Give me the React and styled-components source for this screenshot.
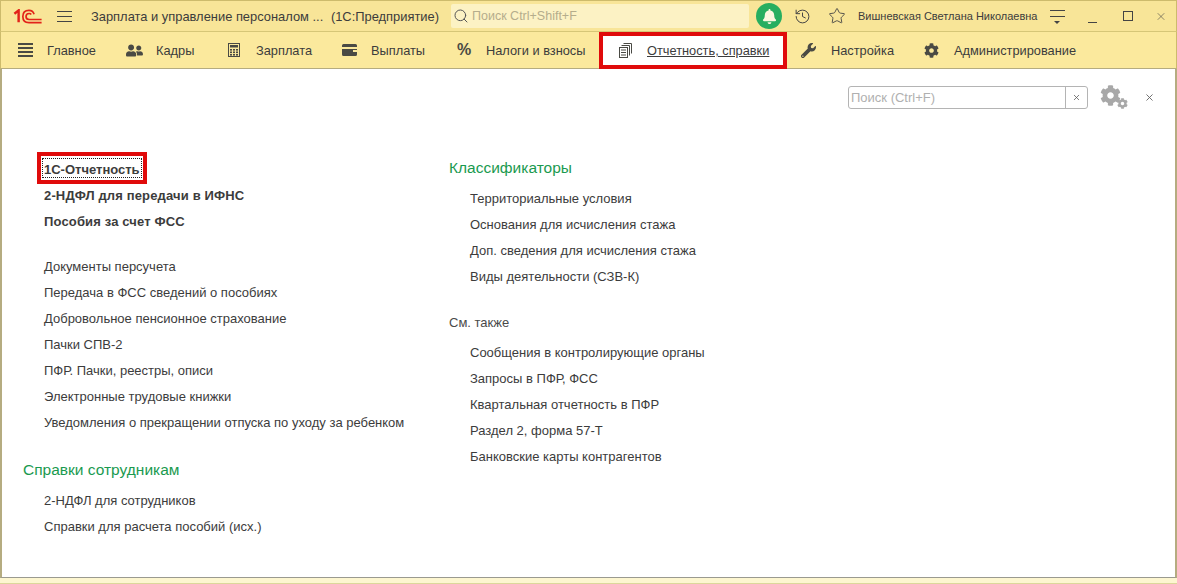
import React from 'react';
import styled, { createGlobalStyle } from 'styled-components';
import { FaUserFriends, FaWrench, FaCog, FaBell } from 'react-icons/fa';
import { History, Star, Search, X } from 'lucide-react';

const GlobalStyle = createGlobalStyle`
  html, body {
    margin: 0;
    padding: 0;
    background: #fff;
  }
  body {
    font-family: 'Liberation Sans', Arial, sans-serif;
    color: #333;
  }
`;

const Window = styled.div`
  width: 1177px;
  height: 584px;
  box-sizing: border-box;
  display: flex;
  flex-direction: column;
  overflow: hidden;
  background: #fdf6d0;
`;
const TitleBar = styled.header`
  height: 32px;
  flex: none;
  box-sizing: border-box;
  display: flex;
  align-items: center;
  background: #f8e598;
  border-top: 1px solid #cdbb6c;
  border-bottom: 1px solid #d6c677;
  border-left: 1px solid #cdbb6c;
  border-right: 1px solid #cdbb6c;
`;
const LogoBox = styled.div`
  width: 44px;
  margin-left: 12px;
  display: flex;
`;
const Burger = styled.div`
  width: 15px;
  height: 9px;
  margin-right: 19px;
  border-top: 1px solid #444;
  border-bottom: 1px solid #444;
  position: relative;
  &:after {
    content: '';
    position: absolute;
    left: 0;
    right: 0;
    top: 4px;
    height: 1px;
    background: #444;
  }
`;
const AppTitle = styled.div`
  font-size: 12.9px;
  color: #3c3c3c;
  width: 360px;
  display: flex;
  justify-content: space-between;
  padding-right: 12px;
  box-sizing: border-box;
  white-space: nowrap;
`;
const GlobalSearch = styled.div`
  width: 298px;
  height: 24px;
  display: flex;
  align-items: center;
  gap: 3px;
  padding-left: 2px;
  box-sizing: border-box;
  background: #fcf2c4;
  border-radius: 2px;
  color: #b5ad8c;
  font-size: 12.5px;
  svg {
    color: #555;
  }
`;
const BellButton = styled.div`
  width: 26px;
  height: 26px;
  margin-left: 7px;
  border-radius: 50%;
  background: #27ae60;
  display: flex;
  align-items: center;
  justify-content: center;
  color: #fbf7e0;
  font-size: 15px;
`;
const TitleIcon = styled.div`
  margin-left: ${props => props.$gap}px;
  width: ${props => props.$width}px;
  display: flex;
  align-items: center;
  justify-content: center;
  color: #444;
`;
const UserName = styled.div`
  margin-left: 12px;
  width: 192px;
  font-size: 11px;
  color: #3c3c3c;
  white-space: nowrap;
`;
const SortIcon = styled.div`
  width: 15px;
  height: 12px;
  border-top: 1px solid #444;
  position: relative;
  &:before {
    content: '';
    position: absolute;
    top: 5px;
    left: 0;
    right: 0;
    height: 1px;
    background: #444;
  }
  &:after {
    content: '';
    position: absolute;
    top: 10px;
    left: 4px;
    border: 3.5px solid transparent;
    border-top-color: #444;
  }
`;
const MinimizeIcon = styled.div`
  width: 9px;
  height: 1px;
  margin: 12px 0 0 23px;
  background: #444;
`;
const MaximizeIcon = styled.div`
  width: 10px;
  height: 10px;
  box-sizing: border-box;
  margin-left: 26px;
  border: 1px solid #444;
`;

const MenuBar = styled.nav`
  height: 36px;
  flex: none;
  display: flex;
  align-items: stretch;
  background: #fbe99d;
  border-left: 1px solid #cdbb6c;
  border-right: 1px solid #cdbb6c;
  border-bottom: 1px solid #b5ac80;
`;
const MenuItem = styled.div`
  display: flex;
  align-items: center;
  width: ${props => props.$width}px;
  box-sizing: border-box;
  padding-left: ${props => props.$pad}px;
  font-size: 12.8px;
  color: #3c3c3c;
  white-space: nowrap;
  ${props =>
    props.$active &&
    `
    background: #fff;
    border: 4px solid #e00b0b;
    margin-bottom: -1px;
  `}
`;
const MenuIcon = styled.span`
  width: ${props => props.$width}px;
  flex: none;
  display: flex;
  align-items: center;
  color: #4a4a44;
`;
const MenuLabel = styled.span`
  text-decoration: ${props => (props.$active ? 'underline' : 'none')};
`;
const ListIcon = styled.div`
  width: 15px;
  height: 14px;
  background: repeating-linear-gradient(#4a4a44 0 2px, transparent 2px 4px);
`;
const Percent = styled.span`
  font-size: 16px;
  font-weight: 700;
`;

const Content = styled.main`
  flex: 1;
  position: relative;
  background: #fff;
  display: grid;
  grid-template-columns: 426px 1fr;
  align-content: start;
  padding-top: 87px;
  border-left: 2px solid #b5ac80;
  border-right: 2px solid #b5ac80;
  border-bottom: 1px solid #9a9a90;
`;
const Footer = styled.footer`
  height: 5px;
  flex: none;
  background: #fdf6d0;
  border-bottom: 1px solid #dcd79b;
`;
const SearchRow = styled.div`
  position: absolute;
  top: 16px;
  left: 846px;
  display: flex;
  align-items: center;
`;
const SearchField = styled.div`
  width: 240px;
  height: 23px;
  box-sizing: border-box;
  display: flex;
  border: 1px solid #b4b4b4;
  border-radius: 3px;
  font-size: 13px;
  color: #b0b0b0;
`;
const SearchText = styled.div`
  flex: 1;
  padding-left: 2px;
  line-height: 21px;
`;
const SearchClear = styled.div`
  width: 21px;
  border-left: 1px solid #b4b4b4;
  display: flex;
  align-items: center;
  justify-content: center;
  color: #555;
`;
const GearBox = styled.div`
  position: relative;
  width: 28px;
  height: 24px;
  margin-left: 12px;
  color: #a8a8a8;
  font-size: 21px;
  svg + svg {
    position: absolute;
    right: 0;
    bottom: 0;
    font-size: 11px;
  }
`;
const CloseForm = styled.div`
  margin-left: 16px;
  display: flex;
  color: #666;
`;

const Column = styled.section`
  display: flex;
  flex-direction: column;
  padding-left: 21px;
  margin-top: ${props => props.$shift}px;
`;
const Group = styled.div`
  display: flex;
  flex-direction: column;
  margin-bottom: ${props => props.$after || 0}px;
`;
const GroupTitle = styled.h2`
  margin: 0 0 5px;
  height: 26px;
  line-height: 26px;
  font-size: 15.5px;
  font-weight: 400;
  color: #1a9a4f;
`;
const SubTitle = styled.h3`
  margin: 0 0 4px;
  height: 26px;
  line-height: 26px;
  font-size: 13px;
  font-weight: 400;
  color: #4a4a4a;
`;
const Link = styled.div`
  height: 26px;
  line-height: 26px;
  padding-left: 21px;
  font-size: 13px;
  font-weight: ${props => (props.$bold ? 700 : 400)};
  letter-spacing: ${props => (props.$bold ? '0.15px' : '0')};
  color: #3c3c3c;
  white-space: nowrap;
`;
const FocusBox = styled.span`
  display: inline-block;
  line-height: 20px;
  letter-spacing: 0;
  position: relative;
  &:before {
    content: '';
    position: absolute;
    inset: -2px -2px 2px -2px;
    border: 1px dotted #222;
  }
  &:after {
    content: '';
    position: absolute;
    inset: -8px -7px -4px -7px;
    border: 4px solid #e00b0b;
  }
`;

const Logo = () => (
  <svg width="30" height="15" viewBox="0 0 31 16" fill="none" stroke="#e2231a">
    <path d="M1 5 L5.5 1.5 V14" strokeWidth="2.6" />
    <path d="M22 5.5 C21 2.5 19 1.5 16.5 1.5 C12.5 1.5 10 4 10 8 C10 12 12.5 14.5 16.5 14.5 H30" strokeWidth="1.8" />
    <path d="M19 5.8 C18.5 5.2 17.5 4.8 16.7 4.8 C14.6 4.8 13.4 6 13.4 8 C13.4 10 14.6 11.2 16.7 11.2 H30" strokeWidth="1.8" />
  </svg>
);

const Wallet = () => (
  <svg width="15" height="12" viewBox="0 0 15 12" fill="#4a4a44">
    <path d="M0 1.5 A1.5 1.5 0 0 1 1.5 0 H13.5 A1.5 1.5 0 0 1 15 1.5 V3 H0 Z" />
    <path d="M0 5 H15 V6 H11 V8 H15 V10.5 A1.5 1.5 0 0 1 13.5 12 H1.5 A1.5 1.5 0 0 1 0 10.5 Z" />
  </svg>
);

const Calculator = () => (
  <svg width="12" height="14" viewBox="0 0 12 14">
    <rect x="0.5" y="0.5" width="11" height="13" fill="none" stroke="#4a4a44" />
    <rect x="2" y="2" width="8" height="2.5" fill="#4a4a44" />
    {[6, 8.5, 11].map(y =>
      [2, 5, 8].map(x => <rect key={`${x}-${y}`} x={x} y={y} width="2" height="1.6" fill="#4a4a44" />)
    )}
  </svg>
);

const ReportStack = () => (
  <svg width="13" height="15" viewBox="0 0 13 15" fill="none" stroke="#4a4a44">
    <path d="M4.5 0.5 H12.5 V10.5" />
    <path d="M2.5 2.5 H10.5 V12.5" />
    <rect x="0.5" y="4.5" width="8" height="10" fill="#fff" />
    <path d="M2 7 H7 M2 9.5 H7 M2 12 H7" />
  </svg>
);

const menu = [
  { label: 'Главное', icon: <ListIcon />, width: 108, pad: 17, iconWidth: 29 },
  { label: 'Кадры', icon: <FaUserFriends size={17} />, width: 100, pad: 17, iconWidth: 30 },
  { label: 'Зарплата', icon: <Calculator />, width: 115, pad: 19, iconWidth: 28 },
  { label: 'Выплаты', icon: <Wallet />, width: 114, pad: 18, iconWidth: 29 },
  { label: 'Налоги и взносы', icon: <Percent>%</Percent>, width: 161, pad: 19, iconWidth: 29 },
  { label: 'Отчетность, справки', icon: <ReportStack />, width: 188, pad: 16, iconWidth: 28, active: true },
  { label: 'Настройка', icon: <FaWrench size={15} />, width: 121, pad: 14, iconWidth: 30 },
  { label: 'Администрирование', icon: <FaCog size={15} />, width: 160, pad: 16, iconWidth: 30 },
];

const reports = ['Документы персучета', 'Передача в ФСС сведений о пособиях', 'Добровольное пенсионное страхование', 'Пачки СПВ-2', 'ПФР. Пачки, реестры, описи', 'Электронные трудовые книжки', 'Уведомления о прекращении отпуска по уходу за ребенком'];
const certs = ['2-НДФЛ для сотрудников', 'Справки для расчета пособий (исх.)'];
const classifiers = ['Территориальные условия', 'Основания для исчисления стажа', 'Доп. сведения для исчисления стажа', 'Виды деятельности (СЗВ-К)'];
const seeAlso = ['Сообщения в контролирующие органы', 'Запросы в ПФР, ФСС', 'Квартальная отчетность в ПФР', 'Раздел 2, форма 57-Т', 'Банковские карты контрагентов'];

const App = () => (
  <Window>
    <GlobalStyle />
    <TitleBar>
      <LogoBox>
        <Logo />
      </LogoBox>
      <Burger />
      <AppTitle>
        <span>Зарплата и управление персоналом ...</span>
        <span>(1С:Предприятие)</span>
      </AppTitle>
      <GlobalSearch>
        <Search size={16} strokeWidth={1.5} />
        Поиск Ctrl+Shift+F
      </GlobalSearch>
      <BellButton>
        <FaBell />
      </BellButton>
      <TitleIcon $gap={11} $width={18}>
        <History size={17} strokeWidth={1.4} />
      </TitleIcon>
      <TitleIcon $gap={17} $width={18}>
        <Star size={18} strokeWidth={1.2} />
      </TitleIcon>
      <UserName>Вишневская Светлана Николаевна</UserName>
      <SortIcon />
      <MinimizeIcon />
      <MaximizeIcon />
      <TitleIcon $gap={22} $width={12}>
        <X size={15} strokeWidth={1.2} />
      </TitleIcon>
    </TitleBar>
    <MenuBar>
      {menu.map(item => (
        <MenuItem key={item.label} $width={item.width} $pad={item.pad} $active={item.active}>
          <MenuIcon $width={item.iconWidth}>{item.icon}</MenuIcon>
          <MenuLabel $active={item.active}>{item.label}</MenuLabel>
        </MenuItem>
      ))}
    </MenuBar>
    <Content>
      <SearchRow>
        <SearchField>
          <SearchText>Поиск (Ctrl+F)</SearchText>
          <SearchClear>
            <X size={9} />
          </SearchClear>
        </SearchField>
        <GearBox>
          <FaCog />
          <FaCog />
        </GearBox>
        <CloseForm>
          <X size={11} />
        </CloseForm>
      </SearchRow>
      <Column $shift={1}>
        <Group $after={19}>
          <Link $bold>
            <FocusBox>1С-Отчетность</FocusBox>
          </Link>
          <Link $bold>2-НДФЛ для передачи в ИФНС</Link>
          <Link $bold>Пособия за счет ФСС</Link>
        </Group>
        <Group $after={21}>
          {reports.map(text => (
            <Link key={text}>{text}</Link>
          ))}
        </Group>
        <Group>
          <GroupTitle>Справки сотрудникам</GroupTitle>
          {certs.map(text => (
            <Link key={text}>{text}</Link>
          ))}
        </Group>
      </Column>
      <Column $shift={-1}>
        <Group $after={20}>
          <GroupTitle>Классификаторы</GroupTitle>
          {classifiers.map(text => (
            <Link key={text}>{text}</Link>
          ))}
        </Group>
        <Group>
          <SubTitle>См. также</SubTitle>
          {seeAlso.map(text => (
            <Link key={text}>{text}</Link>
          ))}
        </Group>
      </Column>
    </Content>
    <Footer />
  </Window>
);

export default App;
